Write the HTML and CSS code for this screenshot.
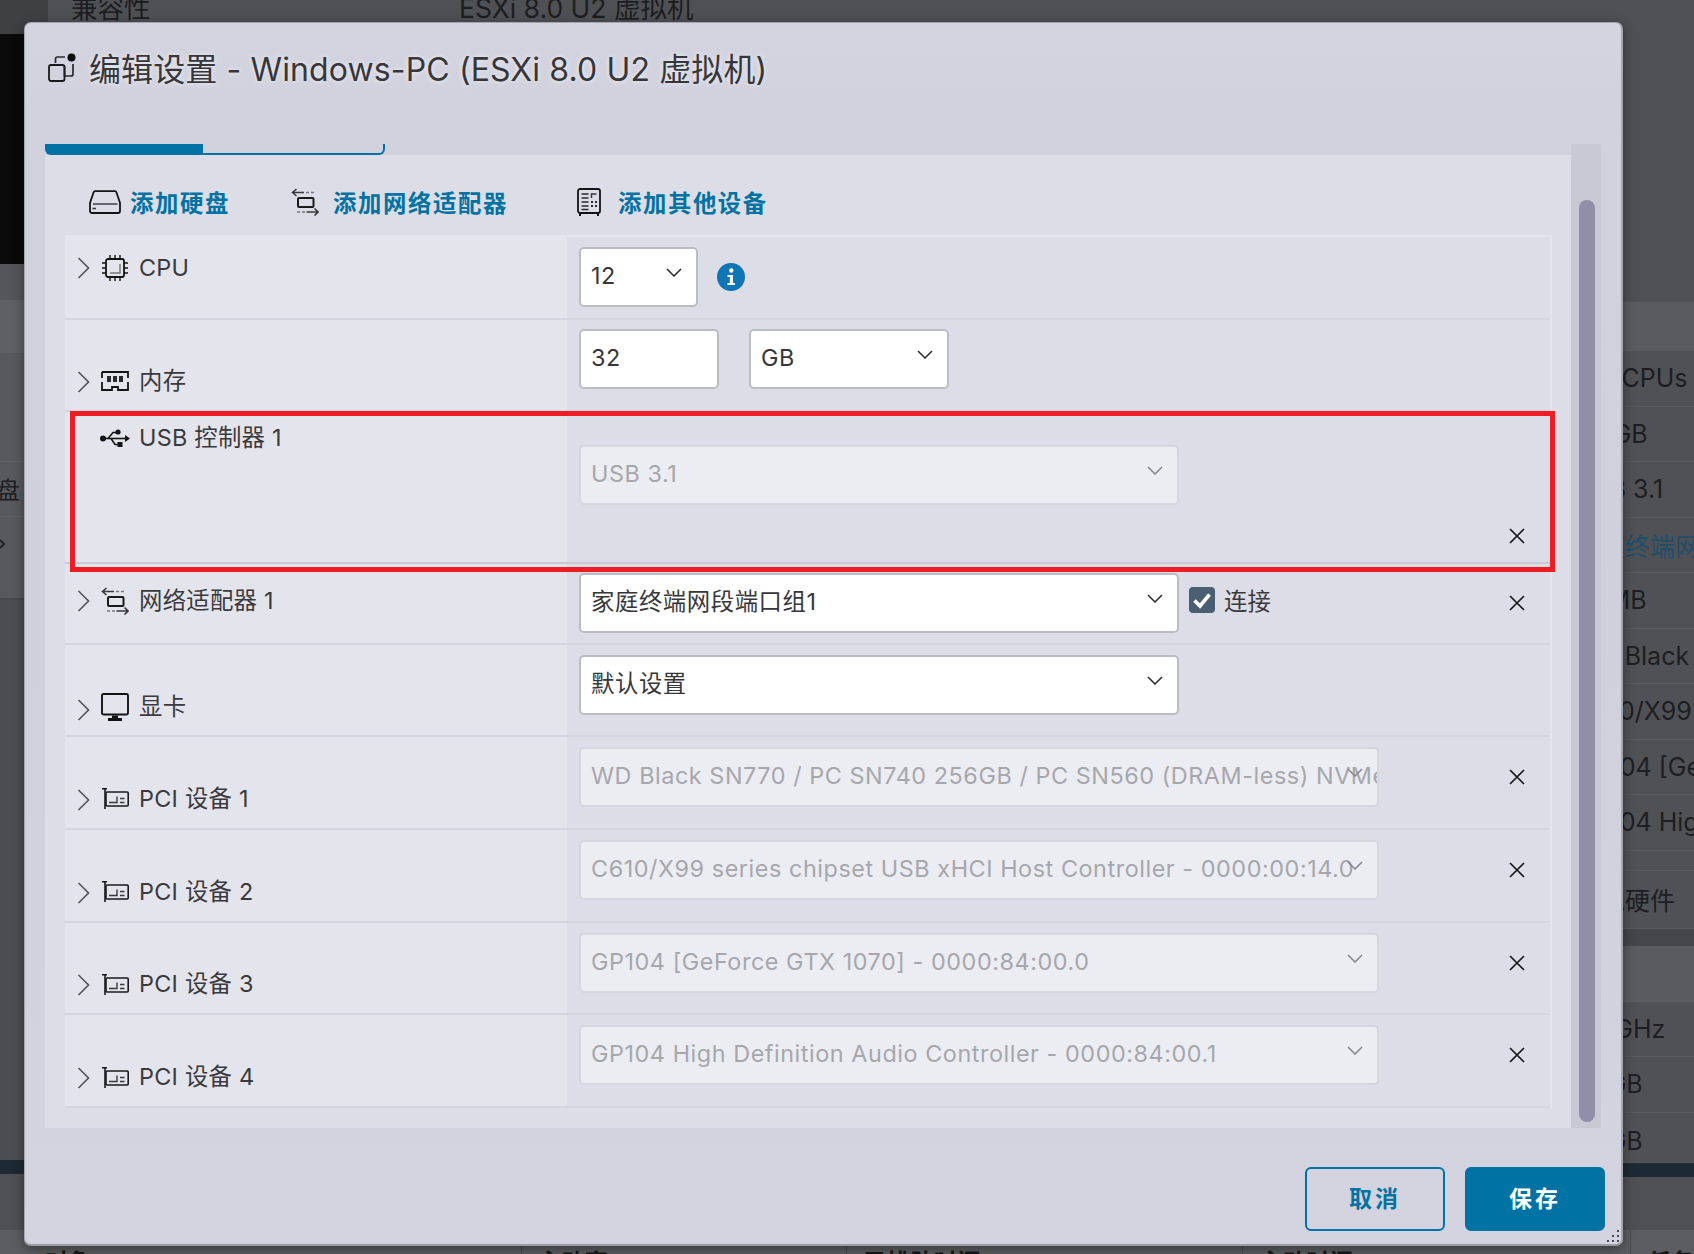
FILE: index.html
```html
<!DOCTYPE html>
<html lang="zh-CN">
<head>
<meta charset="utf-8">
<title>编辑设置</title>
<link rel="stylesheet" href="styles.css">
</head>
<body>
<svg class="defs" width="0" height="0" aria-hidden="true">
  <symbol id="i-chev-right" viewBox="0 0 13 22"><path d="M1.5 1 L11.5 11 L1.5 21" fill="none" stroke="#56565c" stroke-width="1.7"/></symbol>
  <symbol id="i-chev-down" viewBox="0 0 16 9"><path d="M1 1 L8 8 L15 1" fill="none" stroke="currentColor" stroke-width="1.5"/></symbol>
  <symbol id="i-x" viewBox="0 0 16 16"><path d="M1 1 L15 15 M15 1 L1 15" fill="none" stroke="#17171a" stroke-width="1.7"/></symbol>
  <symbol id="i-net" viewBox="0 0 28 28">
    <path d="M1.5 4.5 H13 M5.5 1 L1.5 4.5 L5.5 8" fill="none" stroke="#3a3a3e" stroke-width="1.6"/>
    <path d="M15 4.5 H18 M20 4.5 H23" fill="none" stroke="#77777d" stroke-width="1.4"/>
    <rect x="7" y="10" width="15.5" height="9" rx="1" fill="none" stroke="#1a1a1c" stroke-width="2"/>
    <path d="M6 24 H9 M11 24 H14" fill="none" stroke="#77777d" stroke-width="1.4"/>
    <path d="M15.5 24 H27 M23.5 20.5 L27 24 L23.5 27.5" fill="none" stroke="#3a3a3e" stroke-width="1.6"/>
  </symbol>
  <symbol id="i-pci" viewBox="0 0 27 21">
    <path d="M0 .8 H5 M3 .8 V21" fill="none" stroke="#1a1a1c" stroke-width="1.6"/>
    <rect x="4" y="4" width="22.2" height="14" rx="1" fill="none" stroke="#1a1a1c" stroke-width="1.6"/>
    <path d="M7 14.5 H15 V8.5" fill="none" stroke="#3a3a3e" stroke-width="1.4"/>
    <path d="M18 10.5 H22.5 M18 14.5 H22.5" fill="none" stroke="#3a3a3e" stroke-width="1.4"/>
  </symbol>
</svg>

<div class="page">
  <div class="backdrop">
    <div class="bg-upper">
      <div class="bg-left">
        <div class="bl bl-top"></div>
        <div class="bl bl-black"></div>
        <div class="bl bl-grey"></div>
        <div class="bl bl-head"></div>
        <div class="bl bl-a"></div>
        <div class="bl bl-row">硬盘</div>
        <div class="bl bl-row bl-dot"><svg class="dot-chev" width="6" height="10" viewBox="0 0 6 10"><path d="M0 1 L4 5 L0 9" fill="none" stroke="#222" stroke-width="2"/></svg></div>
        <div class="bl bl-b"></div>
        <div class="bl bl-dark"></div>
        <div class="bl bl-band"></div>
        <div class="bl bl-last"></div>
      </div>
      <div class="bg-main">
        <div class="bg-top-row"><span class="bg-k">兼容性</span><span>ESXi 8.0 U2 虚拟机</span></div>
      </div>
      <div class="bg-right">
        <div class="br br-top"></div>
        <div class="br br-head"></div>
        <div class="br br-row">12 vCPUs</div>
        <div class="br br-row">32 GB</div>
        <div class="br br-row">USB 3.1</div>
        <div class="br br-row br-link">家庭终端网段端口组1</div>
        <div class="br br-row">16 MB</div>
        <div class="br br-row">WD Black SN770</div>
        <div class="br br-row">C610/X99 series</div>
        <div class="br br-row">GP104 [GeForce</div>
        <div class="br br-row">GP104 High</div>
        <div class="br br-gap"></div>
        <div class="br br-row br-tall">其他硬件</div>
        <div class="br br-sep"></div>
        <div class="br br-head2"></div>
        <div class="br br-row">1.5 GHz</div>
        <div class="br br-row">16 GB</div>
        <div class="br br-row br-short">16 GB</div>
        <div class="br br-band"></div>
        <div class="br br-last"></div>
      </div>
    </div>
    <div class="bg-footer">
      <div class="bf bf-1">对象</div>
      <div class="bf bf-2">主动率</div>
      <div class="bf bf-3">已排队时间</div>
      <div class="bf bf-4">主动时间</div>
      <div class="bf bf-5">任务</div>
    </div>
  </div>

  <section class="dialog">
    <header class="dialog-head">
      <svg class="title-icon" width="28" height="29" viewBox="0 0 28 29">
        <circle cx="23.5" cy="4.5" r="4" fill="#0c0c0e"/>
        <path d="M7.5 10 V6 a2 2 0 0 1 2-2 H17 M25 11 V21 a2 2 0 0 1-2 2 H16.5 V13" fill="none" stroke="#2a2a2e" stroke-width="1.7"/>
        <rect x="1" y="12" width="15.5" height="16" rx="2" fill="none" stroke="#1a1a1c" stroke-width="1.8"/>
      </svg>
      <h1 class="title">编辑设置 - Windows-PC (ESXi 8.0 U2 虚拟机)</h1>
    </header>

    <div class="dialog-body">
      <div class="content">
        <div class="tabs"><div class="tab tab-active"></div><div class="tab tab-idle"></div></div>
        <div class="panel">
          <div class="actions">
            <a class="action action-disk">
              <svg width="32" height="24" viewBox="0 0 32 24"><path d="M6 1.2 H26 a1.5 1.5 0 0 1 1.4 1 L31 13 V21 a2 2 0 0 1-2 2 H3 a2 2 0 0 1-2-2 V13 L4.6 2.2 A1.5 1.5 0 0 1 6 1.2 Z" fill="none" stroke="#141416" stroke-width="1.8"/><path d="M4 14 H28.5" stroke="#57575d" stroke-width="1.8"/><path d="M3.5 18.5 H7" stroke="#3a3a3e" stroke-width="1.6"/></svg>
              <span>添加硬盘</span>
            </a>
            <a class="action action-net">
              <svg class="ic-net" width="28" height="28"><use href="#i-net"/></svg>
              <span>添加网络适配器</span>
            </a>
            <a class="action action-other">
              <svg width="24" height="28" viewBox="0 0 24 28"><rect x="1" y="1" width="22" height="24" rx="2" fill="none" stroke="#141416" stroke-width="1.8"/><path d="M3 25 V28 M21 25 V28" stroke="#141416" stroke-width="2"/><path d="M4.5 6 H11.5 M4.5 10 H11.5 M4.5 14 H11.5 M4.5 18 H11.5 M4.5 21.5 H11.5" stroke="#2a2a2e" stroke-width="1.6"/><path d="M14.5 10 V6 H19.5" fill="none" stroke="#3a3a3e" stroke-width="1.5"/><path d="M14 14 h2 M18 14 h2 M14 18 h2 M18 18 h2" stroke="#2a2a2e" stroke-width="2"/></svg>
              <span>添加其他设备</span>
            </a>
          </div>

          <div class="table">
            <div class="row row-cpu">
              <div class="cell-l l-top-19">
                <svg class="chev" width="13" height="22"><use href="#i-chev-right"/></svg>
                <span class="ic"><svg width="26" height="26" viewBox="0 0 26 26"><rect x="4" y="4" width="18" height="18" rx="2" fill="none" stroke="#141416" stroke-width="1.8"/><path d="M8 0 V4 M13 0 V4 M18 0 V4 M8 22 V26 M13 22 V26 M18 22 V26 M0 8 H4 M0 13 H4 M0 18 H4 M22 8 H26 M22 13 H26 M22 18 H26" stroke="#141416" stroke-width="1.4"/><path d="M8 18 H18 V9" fill="none" stroke="#77777d" stroke-width="1.5"/></svg></span>
                <span class="lbl">CPU</span>
              </div>
              <div class="cell-r">
                <div class="select select-xs"><span class="val">12</span><svg class="sel-chev" width="16" height="9"><use href="#i-chev-down"/></svg></div>
                <svg class="info" width="28" height="28" viewBox="0 0 28 28"><circle cx="14" cy="14" r="14" fill="#0e76b4"/><circle cx="14.3" cy="7.5" r="2.2" fill="#fff"/><path d="M10.5 12 H16 V20 H18 V22 H10.5 V20 H12.8 V14 H10.5 Z" fill="#fff"/></svg>
              </div>
            </div>

            <div class="row">
              <div class="cell-l l-bottom l-mem">
                <svg class="chev" width="13" height="22"><use href="#i-chev-right"/></svg>
                <span class="ic"><svg width="28" height="20" viewBox="0 0 28 20"><path d="M1 1 H27 V7 M27 11 V19 H17 V16 H11 V19 H1 V11 M1 7 V1" fill="none" stroke="#141416" stroke-width="1.8"/><path d="M6 5 h4 v6 h-4 z M12 5 h4 v6 h-4 z M18 5 h4 v6 h-4 z" fill="#2a2a2e"/></svg></span>
                <span class="lbl">内存</span>
              </div>
              <div class="cell-r cell-r-10">
                <div class="input">32</div>
                <div class="select select-sm"><span class="val">GB</span><svg class="sel-chev" width="16" height="9"><use href="#i-chev-down"/></svg></div>
              </div>
            </div>

            <div class="row row-usb">
              <div class="cell-l l-top-12">
                <span class="chev-space"></span>
                <span class="ic"><svg width="30" height="19" viewBox="0 0 30 19"><circle cx="3" cy="9.5" r="3" fill="#141416"/><path d="M4 9.5 H27" stroke="#141416" stroke-width="1.6"/><path d="M30 9.5 L25 6 V13 Z" fill="#141416"/><path d="M8 9.5 L13 3.5 H16 M11 9.5 L15 15.5 H18" fill="none" stroke="#141416" stroke-width="1.6"/><circle cx="18" cy="3" r="2.6" fill="#141416"/><rect x="17.5" y="13" width="5" height="5" fill="#141416"/></svg></span>
                <span class="lbl">USB 控制器 1</span>
              </div>
              <div class="cell-r cell-r-usb">
                <div class="select select-md is-disabled"><span class="val">USB 3.1</span><svg class="sel-chev" width="16" height="9"><use href="#i-chev-down"/></svg></div>
                <svg class="rm rm-low" width="16" height="16"><use href="#i-x"/></svg>
              </div>
              <div class="highlight"></div>
            </div>

            <div class="row row-net">
              <div class="cell-l l-top-23">
                <svg class="chev" width="13" height="22"><use href="#i-chev-right"/></svg>
                <span class="ic"><svg width="28" height="28"><use href="#i-net"/></svg></span>
                <span class="lbl">网络适配器 1</span>
              </div>
              <div class="cell-r">
                <div class="select select-md"><span class="val">家庭终端网段端口组1</span><svg class="sel-chev" width="16" height="9"><use href="#i-chev-down"/></svg></div>
                <label class="check">
                  <svg width="26" height="26" viewBox="0 0 26 26"><rect width="26" height="26" rx="4" fill="#4a6072"/><path d="M5.5 13.5 L11 19 L20.5 7.5" fill="none" stroke="#fff" stroke-width="3.6"/></svg>
                  <span>连接</span>
                </label>
                <svg class="rm" width="16" height="16"><use href="#i-x"/></svg>
              </div>
            </div>

            <div class="row">
              <div class="cell-l l-bottom">
                <svg class="chev" width="13" height="22"><use href="#i-chev-right"/></svg>
                <span class="ic"><svg width="28" height="28" viewBox="0 0 28 28"><rect x="1" y="1" width="26" height="20.5" rx="1.5" fill="none" stroke="#141416" stroke-width="1.9"/><path d="M11 22.5 H17 V25 H21 V28 H7 V25 H11 Z" fill="#141416"/></svg></span>
                <span class="lbl">显卡</span>
              </div>
              <div class="cell-r">
                <div class="select select-md"><span class="val">默认设置</span><svg class="sel-chev" width="16" height="9"><use href="#i-chev-down"/></svg></div>
              </div>
            </div>

            <div class="row row-pci">
              <div class="cell-l l-bottom">
                <svg class="chev" width="13" height="22"><use href="#i-chev-right"/></svg>
                <span class="ic"><svg width="27" height="21"><use href="#i-pci"/></svg></span>
                <span class="lbl">PCI 设备 1</span>
              </div>
              <div class="cell-r">
                <div class="select select-lg is-disabled"><span class="val">WD Black SN770 / PC SN740 256GB / PC SN560 (DRAM-less) NVMe</span><svg class="sel-chev" width="16" height="9"><use href="#i-chev-down"/></svg></div>
                <svg class="rm" width="16" height="16"><use href="#i-x"/></svg>
              </div>
            </div>

            <div class="row row-pci">
              <div class="cell-l l-bottom">
                <svg class="chev" width="13" height="22"><use href="#i-chev-right"/></svg>
                <span class="ic"><svg width="27" height="21"><use href="#i-pci"/></svg></span>
                <span class="lbl">PCI 设备 2</span>
              </div>
              <div class="cell-r">
                <div class="select select-lg is-disabled"><span class="val">C610/X99 series chipset USB xHCI Host Controller - 0000:00:14.0</span><svg class="sel-chev" width="16" height="9"><use href="#i-chev-down"/></svg></div>
                <svg class="rm" width="16" height="16"><use href="#i-x"/></svg>
              </div>
            </div>

            <div class="row row-pci">
              <div class="cell-l l-bottom">
                <svg class="chev" width="13" height="22"><use href="#i-chev-right"/></svg>
                <span class="ic"><svg width="27" height="21"><use href="#i-pci"/></svg></span>
                <span class="lbl">PCI 设备 3</span>
              </div>
              <div class="cell-r">
                <div class="select select-lg is-disabled"><span class="val">GP104 [GeForce GTX 1070] - 0000:84:00.0</span><svg class="sel-chev" width="16" height="9"><use href="#i-chev-down"/></svg></div>
                <svg class="rm" width="16" height="16"><use href="#i-x"/></svg>
              </div>
            </div>

            <div class="row row-pci">
              <div class="cell-l l-bottom">
                <svg class="chev" width="13" height="22"><use href="#i-chev-right"/></svg>
                <span class="ic"><svg width="27" height="21"><use href="#i-pci"/></svg></span>
                <span class="lbl">PCI 设备 4</span>
              </div>
              <div class="cell-r">
                <div class="select select-lg is-disabled"><span class="val">GP104 High Definition Audio Controller - 0000:84:00.1</span><svg class="sel-chev" width="16" height="9"><use href="#i-chev-down"/></svg></div>
                <svg class="rm" width="16" height="16"><use href="#i-x"/></svg>
              </div>
            </div>
          </div>
        </div>
      </div>
      <div class="scrollbar"><div class="thumb"></div></div>
    </div>

    <footer class="dialog-foot">
      <button class="btn btn-outline" type="button">取消</button>
      <button class="btn btn-solid" type="button">保存</button>
      <svg class="grip" width="14" height="14" viewBox="0 0 14 14"><path d="M11 1 h2 v2 h-2 z M6 6 h2 v2 h-2 z M11 6 h2 v2 h-2 z M1 11 h2 v2 h-2 z M6 11 h2 v2 h-2 z M11 11 h2 v2 h-2 z" fill="#4a4a50"/></svg>
    </footer>
  </section>
</div>
</body>
</html>
```

FILE: styles.css
```css
* { box-sizing: border-box; }
html, body { margin: 0; padding: 0; }
body {
  width: 1694px;
  height: 1254px;
  overflow: hidden;
  font-family: Inter, "Noto Sans CJK SC", "Noto Sans", sans-serif;
  font-size: 23.4px;
  color: #3a3a3e;
}
.defs { position: absolute; }
.page { position: relative; width: 1694px; height: 1254px; overflow: hidden; }

/* backdrop page behind the dialog */
.backdrop { display: flex; flex-direction: column; height: 1254px; background: #4f5054; color: #1d1e21; }
.bg-upper { display: flex; height: 1230px; }
.bg-left { width: 48px; display: flex; flex-direction: column; overflow: hidden; }
.bl-top { height: 34px; background: #3f4042; }
.bl-black { height: 230px; background: #0a0a0b; }
.bl-grey { height: 36px; background: #55565a; }
.bl-head { height: 53px; background: #5f6063; }
.bl-a { height: 108px; background: #58595d; }
.bl-row { height: 55px; background: #58595d; border-top: 1px solid #616266; display: flex; align-items: center; justify-content: flex-end; white-space: nowrap; padding-right: 28px; overflow: hidden; }
.bl-dot { justify-content: flex-start; padding-right: 0; }
.bl-b { height: 29px; background: #58595d; border-bottom: 2px solid #47484b; flex: none; }
.bl-dark { height: 560px; background: #4c4d51; }
.bl-band { height: 14px; background: #1d2a33; }
.bl-last { flex: 1; background: #4f5054; }
.bg-main { flex: 1; }
.bg-top-row { display: flex; height: 17px; line-height: 17px; padding-left: 23px; white-space: nowrap; font-size: 26.5px; }
.bg-k { width: 388px; }
.bg-right { width: 119px; display: flex; flex-direction: column; overflow: hidden; white-space: nowrap; font-size: 25px; }
.br-top { height: 302px; flex: none; }
.br-head { height: 49px; background: #5a5b5f; flex: none; }
.br-row { height: 55.5px; flex: none; display: flex; align-items: center; background: #505155; border-bottom: 1px solid #5a5b5f; }
.br-link { color: #1f4e6b; }
.br-gap { height: 20px; flex: none; background: #505155; border-bottom: 1px solid #5a5b5f; }
.br-tall { height: 58px; }
.br-sep { height: 17px; flex: none; background: #45464a; }
.br-head2 { height: 56px; flex: none; background: #5a5b5f; }
.br-short { height: 50px; align-items: flex-start; line-height: 56px; }
.br-band { height: 14px; flex: none; background: #1d2a33; }
.br-last { flex: 1; background: #4f5054; }
.bg-footer { display: flex; height: 24px; overflow: hidden; background: #5c5d60; font-weight: 700; color: #18181a; }
.bf { padding: 19px 0 0 16px; line-height: 28px; border-left: 1px solid #4a4b4e; white-space: nowrap; }
.bf-1 { width: 526px; padding-left: 45px; border-left: 0; }
.bf-2 { width: 329px; }
.bf-3 { width: 400px; }
.bf-4 { width: 392px; }
.bf-5 { flex: 1; }

/* dialog */
.dialog {
  position: absolute;
  left: 24px;
  top: 22px;
  width: 1599px;
  height: 1224px;
  display: flex;
  flex-direction: column;
  background: linear-gradient(180deg, #d3d4e0 0%, #d0d1dd 12%, #cfd0dc 50%, #d3d4df 100%);
  border: 1px solid #a5a6b2;
  border-width: 1px 2px 2px 1px;
  border-bottom-color: #9a9ba6;
  border-radius: 7px;
  box-shadow: 0 3px 12px rgba(0, 0, 0, .4);
}
.dialog-head { height: 121px; padding: 27px 0 0 23px; display: flex; align-items: flex-start; gap: 13px; }
.title-icon { margin-top: 3px; flex: none; }
.title {
  margin: 0;
  font-size: 32px;
  line-height: 40px;
  font-weight: 400;
  letter-spacing: .12px;
  color: #37373b;
  text-shadow: 0 0 5px rgba(255, 255, 255, .75);
  white-space: nowrap;
}
.dialog-body { height: 984px; margin-left: 20px; display: flex; }
.content { width: 1526px; display: flex; flex-direction: column; }
.tabs { display: flex; height: 11px; flex: none; }
.tab-active { width: 158px; background: #0072a3; border-bottom-left-radius: 6px; }
.tab-idle { width: 182px; border-bottom: 2px solid #0072a3; border-right: 2px solid #0072a3; border-bottom-right-radius: 6px; }
.panel { flex: 1; background: #dcdde7; padding-left: 20px; }
.actions { height: 80px; padding: 13px 0 0 24px; display: flex; align-items: center; color: #0072a3; font-weight: 700; font-size: 23.4px; letter-spacing: 1.6px; }
.action { display: flex; align-items: center; white-space: nowrap; }
.action svg { flex: none; }
.action-disk { gap: 9px; }
.action-net { gap: 14px; margin-left: 61px; }
.action-other { gap: 17px; margin-left: 69px; }

.table { width: 1487px; border-top: 2px solid #e5e6ed; border-right: 2px solid #e5e6ed; }
.row { position: relative; display: grid; grid-template-columns: 502px 1fr; border-bottom: 2px solid #d4d5df; }
.row:first-child { margin-top: -2px; }
.row-usb { border-bottom-color: #c9cad4; }
.cell-l { background: #e4e5ec; display: flex; padding-left: 12px; }
.cell-r { display: flex; align-items: center; padding: 10px 25px 20px 12px; }
.cell-r-10 { padding-top: 9px; padding-bottom: 21px; }
.row-cpu .cell-r { padding-top: 12px; padding-bottom: 11px; }
.row-net .cell-r { padding-top: 9px; padding-bottom: 10px; }
.row-pci .cell-r { padding-bottom: 20.75px; }
.cell-r-usb { padding: 33px 25px 18px 12px; align-items: flex-start; height: 150px; }
.l-top-19 { padding-top: 19px; }
.l-top-12 { padding-top: 12px; }
.l-top-23 { padding-top: 23px; }
.l-bottom { align-items: flex-end; padding-bottom: 14px; }
.l-mem { padding-bottom: 15px; }
.row-pci .l-bottom { padding-bottom: 15px; }
.chev { flex: none; margin: 3px 9px 0 0; }
.l-mem .chev, .row-pci .chev { margin-bottom: 2px; }
.chev-space { width: 22px; flex: none; }
.ic { width: 30px; height: 28px; flex: none; display: flex; align-items: center; justify-content: center; margin: 0 9px 0 1px; }
.lbl { line-height: 28px; white-space: nowrap; letter-spacing: .25px; }

.input, .select {
  position: relative;
  height: 60px;
  flex: none;
  background: #fff;
  border: 2px solid #bcbdc4;
  border-radius: 5px;
  padding-left: 10px;
  line-height: 54px;
  letter-spacing: .55px;
  color: #37373b;
  overflow: hidden;
  white-space: nowrap;
}
.input { width: 140px; }
.select-xs { width: 119px; }
.select-sm { width: 200px; margin-left: 30px; }
.select-md { width: 600px; }
.select-lg { width: 800px; }
.sel-chev { position: absolute; right: 14px; top: 19px; color: #2a2a2e; }
.is-disabled { background: #ecedf2; border-color: #d5d6de; color: #a6a7ad; }
.is-disabled .sel-chev { color: #85858c; }
.info { margin-left: 19px; flex: none; }
.rm { margin-left: auto; flex: none; }
.rm-low { align-self: flex-end; }
.check { display: flex; align-items: center; gap: 9px; margin: -7px 0 0 10px; }

.highlight { position: absolute; z-index: 2; left: 5px; right: -5px; top: -1px; bottom: -10px; border: 5px solid #ee1c25; pointer-events: none; }

.scrollbar { width: 30px; background: #c8c9d5; padding: 56px 6px 6px 8px; display: flex; }
.thumb { flex: 1; background: #8f8fa8; border-radius: 8px; }

.dialog-foot { position: relative; flex: 1; display: flex; justify-content: flex-end; align-items: flex-start; gap: 20px; padding: 39px 16px 0 0; }
.btn { width: 140px; height: 64px; border-radius: 6px; font-family: inherit; font-size: 23px; font-weight: 700; letter-spacing: 3px; border: 2px solid #0072a3; cursor: pointer; padding: 0 0 5px; }
.btn-outline { background: transparent; color: #0072a3; }
.btn-solid { background: #0072a3; color: #fff; }
.grip { position: absolute; right: 1px; bottom: 1px; }
.bg-top-row, .bl-row { color: #1d1e21; }
```
